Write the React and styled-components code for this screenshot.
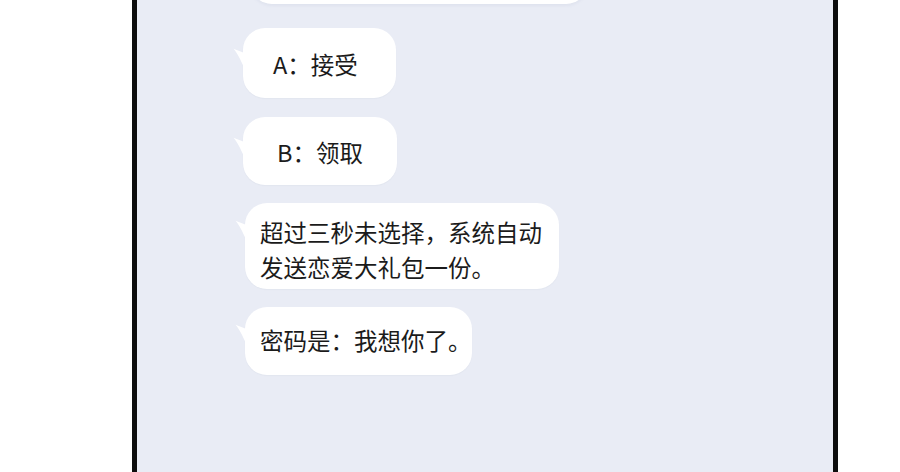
import React from 'react'
import styled, { createGlobalStyle } from 'styled-components'

const GlobalStyle = createGlobalStyle`
  html, body {
    margin: 0;
    padding: 0;
    background: #ffffff;
  }
  body {
    font-family: "Noto Sans CJK SC", "Noto Sans", sans-serif;
  }
`

const Page = styled.div`
  width: 900px;
  height: 472px;
  background: #ffffff;
  overflow: hidden;
`

const Panel = styled.section`
  box-sizing: border-box;
  margin-left: 132px;
  width: 706px;
  height: 472px;
  border-left: 5px solid #0d0d0d;
  border-right: 5px solid #0d0d0d;
  background: #e9ecf5;
  overflow: hidden;
  display: flex;
  flex-direction: column;
  align-items: flex-start;
  padding-left: 106px;
`

const Bubble = styled.div`
  position: relative;
  background: #ffffff;
  border-radius: 22px;
  color: #1b1b1b;
  font-size: 23.5px;
  line-height: 35px;
  white-space: pre-line;
  padding: ${p => p.$pad || '16px 17px 17px 15px'};
  margin-top: ${p => p.$top || '18px'};
  margin-left: ${p => p.$left || '0'};
  box-shadow: 0 1px 1px rgba(120, 130, 160, 0.06);
`

const TopBubble = styled.div`
  width: 338px;
  height: 60px;
  margin-top: -56px;
  margin-left: 7px;
  background: #ffffff;
  border-radius: 22px;
  box-shadow: 0 2px 3px rgba(120, 130, 160, 0.08);
`

const Tail = styled.svg`
  position: absolute;
  left: -10px;
  top: ${p => p.$y || '20px'};
  width: 14px;
  height: 28px;
`

const BubbleTail = ({ y }) => (
  <Tail $y={y} viewBox="0 0 14 28">
    <path d="M14 6 L0.5 0.8 C5 5.5 9 15 14 26 Z" fill="#ffffff" />
  </Tail>
)

const messages = [
  { text: 'A：接受', pad: '19px 38px 16px 30px', top: '24px', tail: '20px' },
  { text: 'B：领取', pad: '18px 34px 15px 34px', top: '19px', tail: '20px' },
  { text: '超过三秒未选择，系统自动\n发送恋爱大礼包一份。', pad: '12px 17px 4px 15px', top: '18px', left: '2px', tail: '17px' },
  { text: '密码是：我想你了。', pad: '16px 0 17px 15px', top: '18px', left: '2px', tail: '17px' },
]

export default function App() {
  return (
    <Page>
      <GlobalStyle />
      <Panel>
        <TopBubble />
        {messages.map((m, i) => (
          <Bubble key={i} $pad={m.pad} $top={m.top} $left={m.left}>
            <BubbleTail y={m.tail} />
            {m.text}
          </Bubble>
        ))}
      </Panel>
    </Page>
  )
}
